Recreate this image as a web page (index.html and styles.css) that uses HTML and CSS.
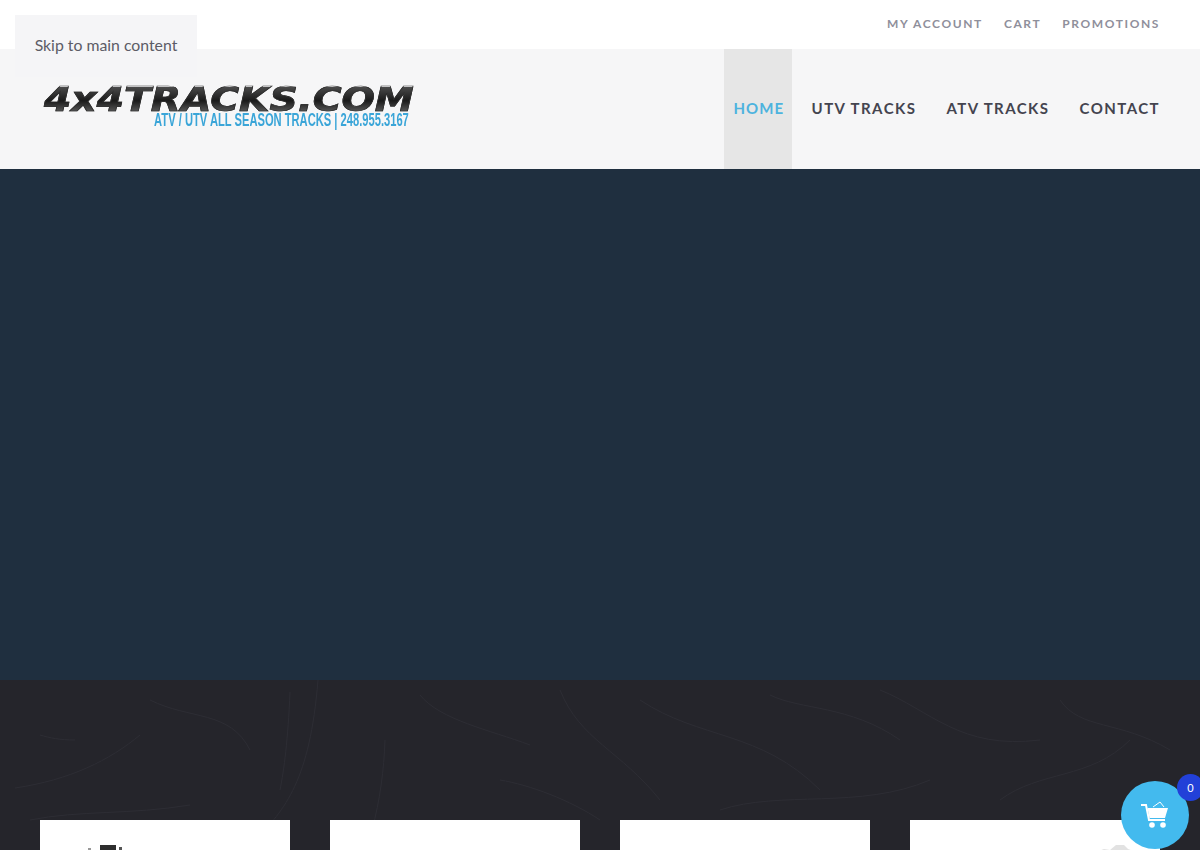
FILE: index.html
```html
<!DOCTYPE html>
<html lang="en">

<head>
    <meta charset="UTF-8">
    <meta name="viewport" content="width=device-width, initial-scale=1.0">
    <title>4x4 Tracks</title>
    <link rel="stylesheet" href="styles.css">
</head>

<body>
    <a class="skip-link" href="#main">Skip to main content</a>

    <div class="top-bar">
        <a href="#">MY ACCOUNT</a>
        <a href="#">CART</a>
        <a href="#">PROMOTIONS</a>
    </div>

    <header class="site-header">
        <a class="logo" href="#">
            <span class="logo-name">4x4TRACKS.COM</span>
            <span class="logo-tag">ATV / UTV ALL SEASON TRACKS | 248.955.3167</span>
        </a>
        <nav class="main-nav">
            <a class="active" href="#">HOME</a>
            <a href="#">UTV TRACKS</a>
            <a href="#">ATV TRACKS</a>
            <a href="#">CONTACT</a>
        </nav>
    </header>

    <section class="hero" id="main"></section>

    <section class="products">
        <svg class="texture" viewBox="0 0 1200 170" preserveAspectRatio="none" aria-hidden="true">
            <path d="M15 108 C70 100 110 80 140 55" />
            <path d="M40 55 C50 58 60 60 75 60" />
            <path d="M255 160 C285 130 310 100 318 0" />
            <path d="M290 12 C288 60 284 90 280 110" />
            <path d="M420 15 C440 40 490 50 530 65" />
            <path d="M385 60 C384 90 380 120 372 150" />
            <path d="M500 100 C530 105 570 120 600 140" />
            <path d="M640 20 C700 60 760 50 820 110" />
            <path d="M720 130 C780 110 860 130 930 100" />
            <path d="M880 10 C930 30 960 70 1040 60" />
            <path d="M1000 120 C1040 90 1090 100 1130 60" />
            <path d="M1060 20 C1080 50 1120 40 1170 70" />
            <path d="M150 20 C190 40 230 30 250 70" />
            <path d="M560 10 C580 60 620 70 660 120" />
            <path d="M30 140 C80 130 130 135 190 125" />
            <path d="M770 15 C800 30 850 25 900 60" />
        </svg>
        <div class="card-row">
            <div class="card">
                <svg class="card-art art-left" width="34" height="6" viewBox="0 0 34 6">
                    <rect x="0" y="4" width="3" height="2" fill="#999" />
                    <rect x="12" y="1" width="16" height="5" fill="#2e2e2e" />
                    <rect x="31" y="3" width="3" height="3" fill="#555" />
                </svg>
            </div>
            <div class="card"></div>
            <div class="card"></div>
            <div class="card">
                <svg class="card-art art-right" width="40" height="8" viewBox="0 0 40 8">
                    <path d="M0 8 L8 5 L14 6 L20 1 L28 1 L32 5 L40 8 Z" fill="#e2e2e2" />
                </svg>
            </div>
        </div>
    </section>

    <a class="cart-button" href="#">
        <svg width="30" height="28" viewBox="0 0 30 28">
            <path d="M1 4 H6 L9 19 H25" fill="none" stroke="#fff" stroke-width="2" />
            <path d="M7.5 7 H28 L25 17 H9.5 Z" fill="#fff" />
            <path d="M13 6 L20 1 L24 6" fill="none" stroke="#fff" stroke-width="1" />
            <circle cx="12" cy="24" r="2.8" fill="#fff" />
            <circle cx="23" cy="24" r="2.8" fill="#fff" />
        </svg>
        <span class="cart-count">0</span>
    </a>
</body>

</html>
```

FILE: styles.css
```css
* {
    margin: 0;
    padding: 0;
    box-sizing: border-box;
    font-family: 'Lato', 'Liberation Sans', sans-serif;
}

html,
body {
    height: 850px;
    overflow: hidden;
}

body {
    background: #fff;
}

a {
    text-decoration: none;
}

.skip-link {
    position: absolute;
    top: 15px;
    left: 15px;
    z-index: 5;
    width: 182px;
    height: 62px;
    padding-top: 20px;
    text-align: center;
    font-size: 15.8px;
    color: #5c5c66;
    background: #f5f5f7;
}

.top-bar {
    height: 47px;
    margin-bottom: 2px;
    padding-right: 40px;
    display: flex;
    justify-content: flex-end;
    align-items: center;
    gap: 21px;
    background: #fff;
}

.top-bar a {
    font-size: 12px;
    font-weight: 700;
    letter-spacing: 1.6px;
    color: #8f8f9b;
}

.site-header {
    height: 120px;
    padding: 0 30px 0 44px;
    display: flex;
    justify-content: space-between;
    background: #f6f6f7;
}

.logo {
    width: 372px;
    padding-top: 38px;
    display: flex;
    flex-direction: column;
    align-items: flex-end;
}

.logo-name {
    width: 372px;
    height: 25px;
    font-family: 'DejaVu Sans', sans-serif;
    font-size: 33px;
    font-weight: 700;
    font-style: italic;
    line-height: 25px;
    white-space: nowrap;
    color: transparent;
    background: linear-gradient(#4a4a4a 0%, #1a1a1a 55%, #5a5a5a 100%);
    -webkit-background-clip: text;
    background-clip: text;
    -webkit-text-stroke: 0.7px #2e2e2e;
    transform-origin: left center;
    transform: scaleX(1.19);
}

.logo-tag {
    margin-right: 7px;
    font-family: 'Liberation Sans', sans-serif;
    font-size: 18px;
    font-weight: 700;
    line-height: 17px;
    white-space: nowrap;
    color: #3aa5d8;
    transform-origin: right center;
    transform: scaleX(0.62);
}

.main-nav {
    display: flex;
    gap: 10px;
    padding-bottom: 2px;
}

.main-nav a {
    padding: 0 10px;
    display: flex;
    align-items: center;
    font-size: 15px;
    font-weight: 700;
    letter-spacing: 1.45px;
    color: #44444f;
}

.main-nav a.active {
    width: 68px;
    margin-bottom: -2px;
    padding: 0 0 2px 10px;
    letter-spacing: 1px;
    color: #4db3de;
    background: #e6e6e6;
}

.hero {
    height: 511px;
    background: #1f2f3f;
}

.products {
    position: relative;
    height: 170px;
    padding: 140px 40px 0;
    overflow: hidden;
    background: #25252b;
}

.texture {
    position: absolute;
    top: 0;
    left: 0;
    width: 100%;
    height: 100%;
}

.texture path {
    fill: none;
    stroke: #2d2d34;
    stroke-width: 1;
}

.card-row {
    position: relative;
    display: grid;
    grid-template-columns: repeat(4, 250px);
    gap: 40px;
}

.card {
    position: relative;
    height: 250px;
    background: #fff;
}

.card-art {
    position: absolute;
    top: 24px;
}

.art-left {
    left: 48px;
}

.art-right {
    right: 24px;
}

.cart-button {
    position: fixed;
    top: 781px;
    left: 1121px;
    width: 68px;
    height: 68px;
    display: flex;
    justify-content: center;
    align-items: center;
    border-radius: 50%;
    background: #43baee;
}

.cart-count {
    position: absolute;
    top: -7px;
    left: 56px;
    width: 27px;
    height: 27px;
    border-radius: 50%;
    text-align: center;
    font-size: 11px;
    line-height: 27px;
    color: #fff;
    background: #2240d8;
}
```
